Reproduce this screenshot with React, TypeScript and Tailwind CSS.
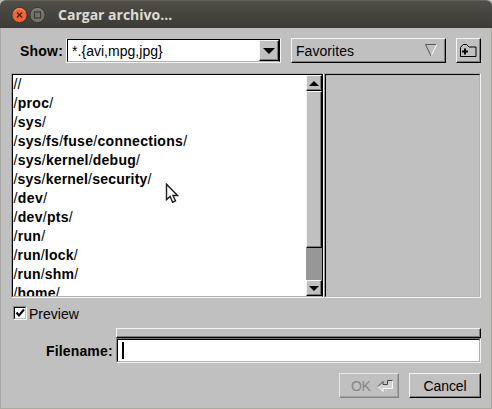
import { Fragment } from 'react';

const paths = [
  { name: '//', tracking: 'tracking-[0px]' },
  { name: '/proc/', tracking: 'tracking-[0.3px]' },
  { name: '/sys/', tracking: 'tracking-[0.3px]' },
  { name: '/sys/fs/fuse/connections/', tracking: 'tracking-[0.29px]' },
  { name: '/sys/kernel/debug/', tracking: 'tracking-[0.25px]' },
  { name: '/sys/kernel/security/', tracking: 'tracking-[0.2px]' },
  { name: '/dev/', tracking: 'tracking-[0.4px]' },
  { name: '/dev/pts/', tracking: 'tracking-[0.3px]' },
  { name: '/run/', tracking: 'tracking-[0.3px]' },
  { name: '/run/lock/', tracking: 'tracking-[0.2px]' },
  { name: '/run/shm/', tracking: 'tracking-[0.2px]' },
  { name: '/home/', tracking: 'tracking-[0.2px]' },
];

function PathRow({ name, tracking }: { name: string; tracking: string }) {
  return (
    <li className={`h-[19px] pl-[0.5px] text-[14px] leading-[19px] font-bold whitespace-nowrap ${tracking}`}>
      {name.split('/').map((part, i) => (
        <Fragment key={i}>
          {i > 0 && <span className="font-normal">/</span>}
          {part}
        </Fragment>
      ))}
    </li>
  );
}

const raised =
  'border border-t-[#f4f4f4] border-l-[#f4f4f4] border-r-black border-b-black shadow-[inset_-1px_-1px_0_#7c7c7c]';
const raisedSoft =
  'border border-t-[#e8e8e8] border-l-[#e8e8e8] border-r-[#858585] border-b-[#858585] shadow-[inset_-1px_-1px_0_#a2a2a2]';

function Arrow({ down = false, wide = false }: { down?: boolean; wide?: boolean }) {
  return (
    <svg width={wide ? 12 : 10} height={wide ? 6 : 5} viewBox="0 0 10 6" preserveAspectRatio="none">
      <path d={down ? 'M0 0H10L5 6Z' : 'M5 0L10 6H0Z'} fill="#000" />
    </svg>
  );
}

function TitleBar() {
  return (
    <header className="flex h-[28px] shrink-0 items-center rounded-t-[6px] border-t border-[#65635b] bg-linear-to-b from-[#504e47] to-[#3c3b37] pl-[11px]">
      <svg width="35" height="18" viewBox="0 0 35 18" fill="none">
        <circle cx="8.5" cy="9" r="7.6" fill="#ee6537" stroke="#393630" />
        <path d="M3 5.8a6.5 6.5 0 0 1 11 0" stroke="#f79772" />
        <path d="M6 6.500l5 5M11 6.500l-5 5" stroke="#4a2216" strokeWidth="1.4" />
        <circle cx="26.5" cy="9" r="7.6" fill="#74736c" stroke="#393630" />
        <path d="M21 5.8a6.500 6.500 0 0 1 11 0" stroke="#8b8a83" />
        <rect x="23.5" y="6" width="6" height="6" stroke="#3b3a35" strokeWidth="1.2" />
      </svg>
      <h1 className="ml-[12px] font-['Open_Sans','Noto_Sans',sans-serif] text-[14px] leading-[20px] font-bold whitespace-nowrap text-[#dfdbd2]">
        Cargar archivo...
      </h1>
    </header>
  );
}

export default function App() {
  return (
    <div className="h-[409px] w-[492px] overflow-hidden bg-[#bdbbb8] font-['Liberation_Sans',Arial,sans-serif] text-[14px] text-black">
      <div className="flex h-full flex-col">
        <TitleBar />
        <main className="flex flex-1 flex-col border-x border-b border-[#a9a8a2] bg-[#c0c0c0] px-[10px]">
          <div className="mt-[10px] flex h-[25px]">
            <label className="w-[55px] pt-[4px] pl-[9px] leading-[18px] font-bold tracking-[0.2px] whitespace-nowrap">Show:</label>
            <div className="flex h-[25px] w-[215px] border border-t-[#c0c0c0] border-r-[#f4f4f4] border-b-[#f4f4f4] border-l-[#f4f4f4]">
              <div className="flex h-[23px] w-[213px] border border-t-black border-r-black border-b-[#b0b0b0] border-l-black bg-white">
                <span className="flex-1 pt-[2px] pl-[4px] leading-[19px] tracking-[0.03px] whitespace-nowrap">*.{'{'}avi,mpg,jpg{'}'}</span>
                <button className={`flex h-[21px] w-[20px] items-center justify-center bg-[#c0c0c0] ${raised}`}>
                  <Arrow down wide />
                </button>
              </div>
            </div>
            <button className={`ml-[10px] flex h-[25px] w-[155px] items-center justify-between pr-[8px] pl-[4px] ${raised}`}>
              <span className="pt-[2px] tracking-[0.05px]">Favorites</span>
              <svg width="12" height="13" viewBox="0 0 12 13" fill="none">
                <path d="M11.500 1L6 12" stroke="#fff" />
                <path d="M11 .5H.5L6 12" stroke="#555" />
              </svg>
            </button>
            <button className={`ml-[10px] flex h-[25px] w-[25px] items-center justify-center pb-px ${raised}`}>
              <svg width="17" height="15" viewBox="0 0 17 15" fill="none" stroke="#000">
                <path d="M.5 13.500V4.500L3 1.500h3.500L9 4h7v9.500z" />
                <path d="M5 5.500v6M2 8.500h6" strokeWidth="2" />
              </svg>
            </button>
          </div>
          <div className="mt-[10px] flex h-[225px]">
            <div className="flex h-[225px] w-[313px] border border-t-[#aaa] border-r-[#f4f4f4] border-b-[#f4f4f4] border-l-[#999]">
              <div className="flex h-[223px] w-[311px] border border-t-black border-r-black border-b-[#b0b0b0] border-l-black bg-white">
                <ul className="h-[221px] flex-1 overflow-hidden">
                  {paths.map((p) => (
                    <PathRow key={p.name} {...p} />
                  ))}
                </ul>
                <div className="flex h-[221px] w-[16px] flex-col bg-[#979797]">
                  <button className={`flex h-[16px] w-[16px] items-center justify-center bg-[#c0c0c0] ${raised}`}>
                    <Arrow />
                  </button>
                  <div className={`h-[157px] bg-[#c0c0c0] ${raised}`} />
                  <button className={`mt-auto flex h-[16px] w-[16px] items-center justify-center bg-[#c0c0c0] ${raised}`}>
                    <Arrow down />
                  </button>
                </div>
              </div>
            </div>
            <div className="h-[225px] w-[157px] border border-t-[#aaa] border-r-[#f4f4f4] border-b-[#f4f4f4] border-l-[#999]">
              <div className="h-[223px] border border-t-black border-r-[#b0b0b0] border-b-[#b8b8b8] border-l-black" />
            </div>
          </div>
          <div className="mt-[8px] flex h-[15px] pl-[2px]">
            <div className="h-[14px] w-[14px] border border-t-[#888] border-r-[#f4f4f4] border-b-[#f4f4f4] border-l-[#888]">
              <div className="h-[12px] w-[12px] border border-t-black border-r-[#c0c0c0] border-b-[#c0c0c0] border-l-black bg-white">
                <svg width="10" height="10" viewBox="0 0 10 10" fill="none">
                  <path d="M1.500 4.500l2.500 3 5-6" stroke="#000" strokeWidth="2" />
                </svg>
              </div>
            </div>
            <span className="ml-[2px] leading-[17px]">Preview</span>
          </div>
          <div className="mt-[7px] flex">
            <label className="w-[105px] pt-[14px] pl-[35px] leading-[18px] font-bold tracking-[0.15px] whitespace-nowrap">Filename:</label>
            <div className="w-[365px]">
              <div className={`h-[10px] ${raised}`} />
              <div className="h-[25px] border border-t-[#777] border-r-[#f4f4f4] border-b-[#f4f4f4] border-l-[#888]">
                <div className="h-[23px] border border-t-black border-r-[#b0b0b0] border-b-[#b0b0b0] border-l-black bg-white pt-[2px] pl-[4px]">
                  <div className="h-[17px] w-[2px] bg-black" />
                </div>
              </div>
            </div>
          </div>
          <div className="mt-[10px] flex h-[25px] justify-end gap-[10px]">
            <button className={`flex h-[25px] w-[60px] items-center pl-[11px] text-[#858585] ${raisedSoft}`}>
              <span className="pt-[2px] tracking-[-0.3px]">OK</span>
              <svg className="ml-[6px]" width="17" height="12" viewBox="0 0 17 12" fill="none">
                <path d="M1 6.500L6 1.500V4.500H10.500V.5H15.500V8.500H6V11.500Z" fill="#d2d2d2" />
                <path d="M1 6.500l5 5v-3h9.500V.5" stroke="#fff" />
                <path d="M15.500 .5h-5v4H6V1.500L1 6.500" stroke="#444" />
              </svg>
            </button>
            <button className={`flex h-[25px] w-[72px] items-center justify-center ${raised}`}>
              <span className="pt-[2px] tracking-[-0.1px]">Cancel</span>
            </button>
          </div>
        </main>
      </div>
      <svg className="absolute top-[183px] left-[165px]" width="14" height="21" viewBox="0 0 14 21">
        <path d="M1.500 1.200v15.400l3.600-3.200 2.500 5.800 2.900-1.300-2.500-5.400h4.500z" fill="#fff" stroke="#1c1c1c" strokeWidth="1.400" />
      </svg>
    </div>
  );
}
